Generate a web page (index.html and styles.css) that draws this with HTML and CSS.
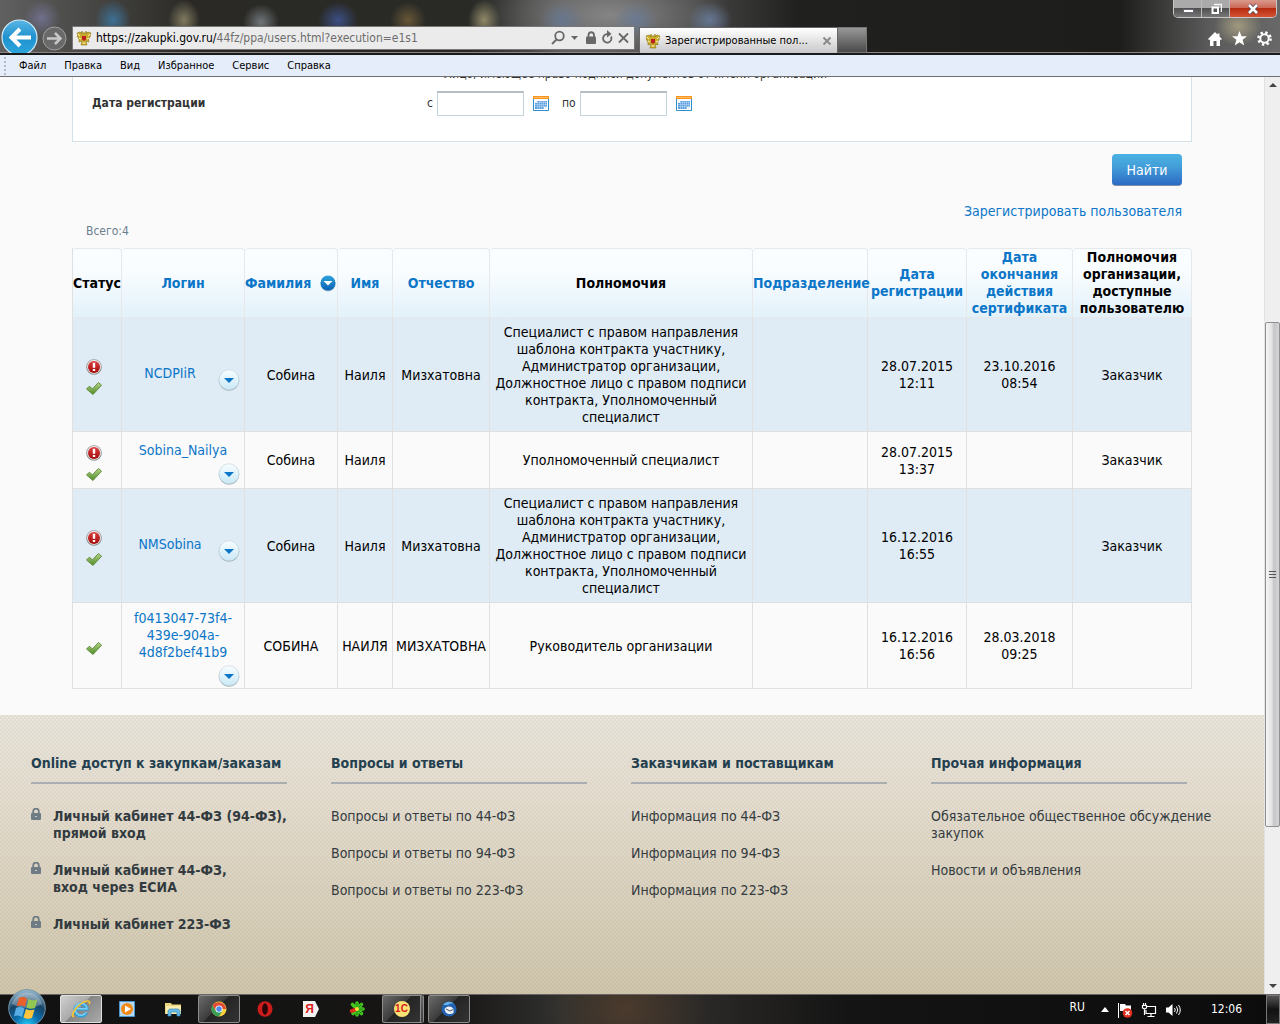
FILE: index.html
```html
<!DOCTYPE html>
<html lang="ru">
<head>
  <meta charset="UTF-8" />
  <meta name="viewport" content="width=device-width, initial-scale=1.0" />
  <title>Зарегистрированные пользователи</title>
  <link rel="stylesheet" href="styles.css">
</head>
<body>
  <!-- shared icons -->
  <svg class="sprite" width="0" height="0" aria-hidden="true">
    <defs>
      <linearGradient id="redGrad" x1="0" y1="0" x2="0" y2="1"><stop offset="0" stop-color="#dc4040"/><stop offset="1" stop-color="#a30808"/></linearGradient>
      <linearGradient id="greenGrad" x1="0" y1="0" x2="0" y2="1"><stop offset="0" stop-color="#b5d58a"/><stop offset="1" stop-color="#4f8a25"/></linearGradient>
      <linearGradient id="roundGrad" x1="0" y1="0" x2="0" y2="1"><stop offset="0" stop-color="#f8fdff"/><stop offset="1" stop-color="#c9e9f6"/></linearGradient>
      <linearGradient id="sortGrad" x1="0" y1="0" x2="0" y2="1"><stop offset="0" stop-color="#2fa4dc"/><stop offset="1" stop-color="#0b5fb4"/></linearGradient>
      <linearGradient id="backGrad" x1="0" y1="0" x2="0" y2="1"><stop offset="0" stop-color="#5ab6e4"/><stop offset=".5" stop-color="#1f92cf"/><stop offset="1" stop-color="#2ea6dd"/></linearGradient>
      <radialGradient id="orbGrad" cx=".5" cy="1" r="1"><stop offset="0" stop-color="#26d3ff"/><stop offset=".35" stop-color="#0c6fae"/><stop offset=".65" stop-color="#174467"/><stop offset="1" stop-color="#9fc0d4"/></radialGradient>
    </defs>
    <symbol id="alert" viewBox="0 0 16 16">
      <circle cx="8" cy="8" r="7.800" fill="#8e8e8e"/><circle cx="8" cy="7.700" r="7" fill="#e8e4e4"/>
      <circle cx="8" cy="8" r="6" fill="url(#redGrad)"/>
      <path d="M6.800 3.800h2.400v5H6.800zM6.800 10h2.400v2H6.800z" fill="#fff"/>
    </symbol>
    <symbol id="check" viewBox="0 0 16 16">
      <path d="M.5 8 3.300 5.200l3.200 2.600L12.400 1.500 15.600 4.200 7 13.500z" fill="url(#greenGrad)" stroke="#5d8a3a" stroke-width=".9" stroke-linejoin="round"/>
    </symbol>
    <symbol id="drop" viewBox="0 0 22 22">
      <circle cx="11" cy="11.500" r="10.300" fill="#9fb0b8"/><circle cx="11" cy="10.700" r="10" fill="url(#roundGrad)" stroke="#c5d5dc" stroke-width=".6"/>
      <path d="M6 9h10l-5 5z" fill="#0b76c8"/>
    </symbol>
    <symbol id="calendar" viewBox="0 0 16 16">
      <path d="M.5 1.500h15v13H.5z" fill="#fff" stroke="#2f8fce"/><path d="M0 0h16v3H0z" fill="#f7941d"/><path d="M1 1h14v1H1z" fill="#ffbb66"/>
      <path d="M4 5h10v6h-3v2H2V7h2z" fill="#5b9fdf"/>
      <path d="M2 6.500h12M2 8.500h12M2 10.500h12M4.500 5v8M6.500 5v8M8.500 5v8M10.500 5v8M12.500 5v8" stroke="#c4ddf4" stroke-width=".5"/>
    </symbol>
    <symbol id="lock" viewBox="0 0 10 12">
      <path d="M2.200 6V3.400a2.800 2.800 0 0 1 5.600 0V6" fill="none" stroke="currentColor" stroke-width="1.800"/><rect y="5" width="10" height="7" rx="1" fill="currentColor"/><path d="M4 8h2v1H4z" fill="#c9c8c2"/>
    </symbol>
    <symbol id="eagle" viewBox="0 0 16 16">
      <path d="M8 4 6.500 1.500 5 2l1 2-2-2-3 1 1 2-1 1 1 1.500 1 2L3 12l3-1-1 4h6l-1-4 3 1-.5-2.500 1-2L14.500 6 14 5l1-2-3-1-2 2 1-2-1.500-.5z" fill="#c9ab2b" stroke="#8a741b" stroke-width=".6"/>
      <path d="M2 4l2 2M3 8l2 1M14 4l-2 2M13 8l-2 1M6.500 13h3" stroke="#fbf5b8"/><path d="M6 6h4v3.500L8 11 6 9.500z" fill="#bc2020"/>
    </symbol>
  </svg>

  <header class="chrome">
    <button class="nav-back" aria-label="Назад">
      <svg width="37" height="37" viewBox="0 0 37 37"><circle cx="18.500" cy="18.500" r="17.500" fill="url(#backGrad)" stroke="#d5edf8" stroke-width="1.200"/><path d="M30 18.500H11M19 10l-8.500 8.500L19 27" fill="none" stroke="#fff" stroke-width="4"/></svg>
    </button>
    <button class="nav-forward" aria-label="Вперед">
      <svg width="25" height="25" viewBox="0 0 25 25"><circle cx="12.500" cy="12.500" r="11.500" fill="#696969" stroke="#a0a0a0"/><path d="M5 12.500h13M13 7l5.500 5.500L13 18" fill="none" stroke="#c8c8c8" stroke-width="2.500"/></svg>
    </button>
    <div class="address">
      <svg width="16" height="16"><use href="#eagle"/></svg>
      <span class="url">https://zakupki.gov.ru/<span>44fz/ppa/users.html?execution=e1s1</span></span>
      <svg width="80" height="16" viewBox="0 0 80 16" fill="none" stroke="#686868" stroke-width="1.800">
        <circle cx="8.500" cy="6" r="4.300"/><path d="M5.500 9.500 1 14"/><path d="M20 6h7l-3.500 4z" fill="#686868" stroke="none"/>
        <path d="M37.500 7V4.500a2.800 2.800 0 0 1 5.500 0V7"/><rect x="35" y="6.500" width="10" height="7.500" rx="1" fill="#686868" stroke="none"/>
        <path d="M60 6.500A4.200 4.200 0 1 1 56 4.200h1.500"/><path d="M56 0l4.500 4L56 7.500z" fill="#686868" stroke="none"/><path d="M68 3.500l9 9M77 3.500l-9 9"/>
      </svg>
    </div>
    <div class="tab">
      <svg width="16" height="16"><use href="#eagle"/></svg>
      <span>Зарегистрированные пол...</span>
      <button aria-label="Закрыть вкладку"><svg width="8" height="8" viewBox="0 0 8 8"><path d="M.5.5l7 7M7.500.5l-7 7" stroke="#8a8a8a" stroke-width="2"/></svg></button>
    </div>
    <button class="new-tab" aria-label="Новая вкладка"></button>
    <div class="chrome-right">
      <div class="window-buttons">
        <button aria-label="Свернуть"><svg width="12" height="12" viewBox="0 0 12 12"><path d="M1.500 6.500h10v3h-10z" fill="#fff" stroke="#555566" stroke-width=".8"/></svg></button>
        <button aria-label="Восстановить"><svg width="12" height="12" viewBox="0 0 12 12"><path d="M4 1.500h7.500V9" fill="none" stroke="#f4f4f4" stroke-width="1.500"/><path d="M2.500 4.500h5.500v5.500H2.500z" fill="#555" stroke="#fff" stroke-width="2"/></svg></button>
        <button class="close" aria-label="Закрыть"><svg width="12" height="12" viewBox="0 0 12 12"><path d="M2 2l8 8M10 2l-8 8" stroke="#504050" stroke-width="4"/><path d="M2 2l8 8M10 2l-8 8" stroke="#fff" stroke-width="2.600"/></svg></button>
      </div>
      <div class="tools">
        <svg width="14" height="14" viewBox="0 0 14 14"><path d="M7 0 0 7l1 1 1-.5V14h3.500V9h3v5H12V7.500l1 .5 1-1-2.500-2.500V1.500h-2v1z" fill="#fff"/></svg>
        <svg width="15" height="15" viewBox="0 0 15 15"><path d="M7.500 0 9.500 5.300H15L10.600 8.800 12.200 14.500 7.500 11.200 2.800 14.500 4.400 8.800 0 5.300h5.500z" fill="#fff"/></svg>
        <svg width="15" height="15" viewBox="0 0 15 15"><circle cx="7.500" cy="7.500" r="4.200" fill="none" stroke="#fff" stroke-width="2"/><circle cx="7.500" cy="7.500" r="6.100" fill="none" stroke="#fff" stroke-width="2.400" stroke-dasharray="2.400 2.390"/></svg>
      </div>
    </div>
  </header>

  <nav class="menu">
    <a href="#">Файл</a>
    <a href="#">Правка</a>
    <a href="#">Вид</a>
    <a href="#">Избранное</a>
    <a href="#">Сервис</a>
    <a href="#">Справка</a>
  </nav>

  <div class="viewport">
    <div class="page">
      <main class="content">
        <form class="search">
          <div class="filter">
            <p class="filter-hint">Лицо, имеющее право подписи документов от имени организации</p>
            <div class="filter-row">
              <span class="filter-name">Дата регистрации</span>
              <label for="dateFrom">с</label>
              <input type="text" id="dateFrom">
              <svg width="16" height="16"><use href="#calendar"/></svg>
              <label class="to" for="dateTo">по</label>
              <input type="text" id="dateTo">
              <svg width="16" height="16"><use href="#calendar"/></svg>
            </div>
          </div>
          <button type="button" class="find">Найти</button>
        </form>
        <a class="register" href="#">Зарегистрировать пользователя</a>
        <div class="total">Всего:4</div>

        <table class="users">
          <colgroup>
            <col class="c-status"><col class="c-login"><col class="c-surname"><col class="c-name"><col class="c-patronymic"><col><col class="c-unit"><col class="c-date"><col class="c-expiry"><col class="c-org">
          </colgroup>
          <thead>
            <tr>
              <th>Статус</th>
              <th><a href="#">Логин</a></th>
              <th><div class="sorted"><a href="#">Фамилия</a><svg width="16" height="17" viewBox="0 0 16 17"><circle cx="8" cy="9" r="7.500" fill="#9dbbd0"/><circle cx="8" cy="8" r="7.500" fill="url(#sortGrad)"/><path d="M3.500 6h9L8 10.500z" fill="#fff"/></svg></div></th>
              <th><a href="#">Имя</a></th>
              <th><a href="#">Отчество</a></th>
              <th>Полномочия</th>
              <th><a href="#">Подразделение</a></th>
              <th><a href="#">Дата<br>регистрации</a></th>
              <th><a href="#">Дата<br>окончания<br>действия<br>сертификата</a></th>
              <th>Полномочия<br>организации,<br>доступные<br>пользователю</th>
            </tr>
          </thead>
          <tbody>
            <tr>
              <td><div class="status"><svg width="16" height="16"><use href="#alert"/></svg><svg width="16" height="16"><use href="#check"/></svg></div></td>
              <td><div class="login"><a href="#">NCDPIiR</a><button aria-label="Меню"><svg width="22" height="22"><use href="#drop"/></svg></button></div></td>
              <td>Собина</td>
              <td>Наиля</td>
              <td>Мизхатовна</td>
              <td>Специалист с правом направления<br>шаблона контракта участнику,<br>Администратор организации,<br>Должностное лицо с правом подписи<br>контракта, Уполномоченный<br>специалист</td>
              <td></td>
              <td>28.07.2015<br>12:11</td>
              <td>23.10.2016<br>08:54</td>
              <td>Заказчик</td>
            </tr>
            <tr>
              <td><div class="status"><svg width="16" height="16"><use href="#alert"/></svg><svg width="16" height="16"><use href="#check"/></svg></div></td>
              <td><div class="login stacked"><a href="#">Sobina_Nailya</a><button aria-label="Меню"><svg width="22" height="22"><use href="#drop"/></svg></button></div></td>
              <td>Собина</td>
              <td>Наиля</td>
              <td></td>
              <td>Уполномоченный специалист</td>
              <td></td>
              <td>28.07.2015<br>13:37</td>
              <td></td>
              <td>Заказчик</td>
            </tr>
            <tr>
              <td><div class="status"><svg width="16" height="16"><use href="#alert"/></svg><svg width="16" height="16"><use href="#check"/></svg></div></td>
              <td><div class="login"><a href="#">NMSobina</a><button aria-label="Меню"><svg width="22" height="22"><use href="#drop"/></svg></button></div></td>
              <td>Собина</td>
              <td>Наиля</td>
              <td>Мизхатовна</td>
              <td>Специалист с правом направления<br>шаблона контракта участнику,<br>Администратор организации,<br>Должностное лицо с правом подписи<br>контракта, Уполномоченный<br>специалист</td>
              <td></td>
              <td>16.12.2016<br>16:55</td>
              <td></td>
              <td>Заказчик</td>
            </tr>
            <tr>
              <td><div class="status"><svg width="16" height="16"><use href="#check"/></svg></div></td>
              <td><div class="login stacked"><a href="#">f0413047-73f4-<br>439e-904a-<br>4d8f2bef41b9</a><button aria-label="Меню"><svg width="22" height="22"><use href="#drop"/></svg></button></div></td>
              <td>СОБИНА</td>
              <td>НАИЛЯ</td>
              <td>МИЗХАТОВНА</td>
              <td>Руководитель организации</td>
              <td></td>
              <td>16.12.2016<br>16:56</td>
              <td>28.03.2018<br>09:25</td>
              <td></td>
            </tr>
          </tbody>
        </table>
      </main>

      <footer class="footer">
        <section>
          <h3>Online доступ к закупкам/заказам</h3>
          <ul class="cabinets">
            <li><svg width="10" height="12"><use href="#lock"/></svg><a href="#">Личный кабинет 44-ФЗ (94-ФЗ),<br>прямой вход</a></li>
            <li><svg width="10" height="12"><use href="#lock"/></svg><a href="#">Личный кабинет 44-ФЗ,<br>вход через ЕСИА</a></li>
            <li><svg width="10" height="12"><use href="#lock"/></svg><a href="#">Личный кабинет 223-ФЗ</a></li>
          </ul>
        </section>
        <section>
          <h3>Вопросы и ответы</h3>
          <ul>
            <li><a href="#">Вопросы и ответы по 44-ФЗ</a></li>
            <li><a href="#">Вопросы и ответы по 94-ФЗ</a></li>
            <li><a href="#">Вопросы и ответы по 223-ФЗ</a></li>
          </ul>
        </section>
        <section>
          <h3>Заказчикам и поставщикам</h3>
          <ul>
            <li><a href="#">Информация по 44-ФЗ</a></li>
            <li><a href="#">Информация по 94-ФЗ</a></li>
            <li><a href="#">Информация по 223-ФЗ</a></li>
          </ul>
        </section>
        <section>
          <h3>Прочая информация</h3>
          <ul>
            <li><a href="#">Обязательное общественное обсуждение<br>закупок</a></li>
            <li><a href="#">Новости и объявления</a></li>
          </ul>
        </section>
      </footer>
    </div>

    <div class="scrollbar">
      <svg width="8" height="16" viewBox="0 0 8 16"><path d="M0 10h8L4 6z" fill="#444"/></svg>
      <div class="track">
        <div class="before"></div>
        <div class="thumb"><i></i><i></i><i></i></div>
        <div class="after"></div>
      </div>
      <svg width="8" height="16" viewBox="0 0 8 16"><path d="M0 6h8l-4 4z" fill="#444"/></svg>
    </div>
  </div>

  <div class="taskbar">
    <button class="start" aria-label="Пуск">
      <svg width="38" height="38" viewBox="0 0 38 38">
        <circle cx="19" cy="19" r="18.300" fill="url(#orbGrad)" stroke="#6f93a8"/>
        <path d="M4 15a15.500 15.500 0 0 1 30 0c-9 5-21 5-30 0z" fill="#fff" opacity=".28"/>
        <path d="M11 9c3-1.500 6-1 8 .5L17 18c-2-1.500-5-2-8.500-.5z" fill="#e8602c"/><path d="M20.500 10c3 1.500 6 1.500 9 .5L27 19c-3 1-6 1-8.500-.5z" fill="#93c653"/>
        <path d="M8 19c3-1.500 6-1 8.500.5L14 28c-2.500-1.500-5-2-8-.5z" fill="#58aee4"/><path d="M18 20c3 1.500 5.500 1.500 8.500.5L24 29c-3 1-6 1-8.500-.5z" fill="#fcc63c"/>
      </svg>
    </button>
    <div class="apps">
      <button class="active" aria-label="Internet Explorer"><svg width="20" height="20" viewBox="0 0 20 20"><path d="M15.500 13.500A6 6 0 1 1 16 10H5" fill="none" stroke="#2b9fdc" stroke-width="3.200"/><path d="M15.200 13.300A6 6 0 1 1 16 9.700H5" fill="none" stroke="#7dd0f6" stroke-width="1.400"/><path d="M3 18c-5-2 6-16 14-16 2 0 2 2 1 3" fill="none" stroke="#f4c430" stroke-width="1.700"/></svg></button>
      <button aria-label="Проигрыватель"><svg width="16" height="16" viewBox="0 0 16 16"><path d="M.5.5h15v15H.5z" fill="#b6daf3" stroke="#4a95cb"/><circle cx="8" cy="8" r="6" fill="#f28a16"/><path d="M6 4.500v7l6-3.500z" fill="#fff"/></svg></button>
      <button aria-label="Проводник"><svg width="17" height="16" viewBox="0 0 17 16"><path d="M0 2h6l1 1.500h9V13H0z" fill="#ecd57c"/><path d="M1 5h15v8H1z" fill="#faedaf"/><path d="M3 15v-5l1.500-2h9l1.500 2v5h-3v-4H6v4z" fill="#6bbbe6" stroke="#358ebf" stroke-width=".7"/></svg></button>
      <button class="open" aria-label="Chrome"><svg width="16" height="16" viewBox="0 0 16 16"><circle cx="8" cy="8" r="7.500" fill="#f9cf3c"/><path d="M8 8H15A7.500 7.500 0 0 0 1.500 4.300L4.700 10z" fill="#df4936"/><path d="M1.500 4.300A7.500 7.500 0 0 0 8 15.500L11.300 10 8 8 4.700 10z" fill="#38a156"/><circle cx="8" cy="8" r="3.600" fill="#fff"/><circle cx="8" cy="8" r="2.700" fill="#4b8bf0"/></svg></button>
      <button aria-label="Opera"><svg width="16" height="16" viewBox="0 0 16 16"><ellipse cx="8" cy="8" rx="7.500" ry="7.800" fill="#cc1c1c"/><ellipse cx="8" cy="8" rx="2.800" ry="5.800" fill="#260606"/></svg></button>
      <button class="yandex" aria-label="Яндекс"><span>Я</span></button>
      <button aria-label="ICQ"><svg width="16" height="16" viewBox="0 0 16 16"><g stroke="#43c51f" stroke-width="3.600" stroke-linecap="round"><path d="M8 8V2M8 8l4.500-4.500M8 8h6M8 8l4.500 4.500M8 8v6M8 8l-4 4.500M8 8 3.500 3.500"/><path d="M7 8.500 2.500 10" stroke="#e22c1e"/></g><path d="M8 8V2M8 8l4.500-4.500M8 8h6M8 8l4.500 4.500M8 8v6" stroke="#238c12"/><circle cx="8" cy="8" r="2" fill="#f8e23b"/></svg></button>
      <button class="open group one-c" aria-label="1С"><span>1С</span></button>
      <button class="open" aria-label="Thunderbird"><svg width="16" height="16" viewBox="0 0 16 16"><circle cx="8" cy="8" r="7.500" fill="#2262b0"/><path d="M2 4c3-4 8-4 11-1-3-1-5 0-6 1z" fill="#65b2ee"/><path d="M3.500 8c2-3 5-3 7-2l2 2v4c-3 2-7 1-8-1z" fill="#eef1f5"/><path d="M5 8l4 2 3-1.500" fill="none" stroke="#345" stroke-width=".9"/></svg></button>
    </div>
    <div class="tray">
      <span class="lang">RU</span>
      <svg width="8" height="5" viewBox="0 0 8 5"><path d="M0 5h8L4 0z" fill="#fff"/></svg>
      <svg width="16" height="16" viewBox="0 0 16 16"><path d="M1.500 1v15" stroke="#fff"/><path d="M3 2h5l1 1.500h5V9H3z" fill="#fff"/><circle cx="10.500" cy="11" r="4.800" fill="#df3020"/><path d="M8.500 9l4 4M12.500 9l-4 4" stroke="#fff" stroke-width="1.500"/></svg>
      <svg width="16" height="16" viewBox="0 0 16 16" fill="none" stroke="#fff" stroke-width="1.200"><path d="M6 4.500h8.500v7H5V8M10 11.500V14M6.500 14.500h7"/><path d="M1.500 3.500h4V6L3.500 7 1.500 6zM2.500 1v2M4.500 1v2M3.500 7v6"/></svg>
      <svg width="16" height="16" viewBox="0 0 16 16"><path d="M1 5.500h2.500L7.500 2v12l-4-3.500H1z" fill="#fff"/><path d="M9.500 6q1.500 2 0 4M11.500 4.500q2.500 3.500 0 7M13.500 3q3.500 5 0 10" fill="none" stroke="#fff"/></svg>
      <time class="clock">12:06</time>
      <button class="show-desktop" aria-label="Свернуть все окна"></button>
    </div>
  </div>
</body>
</html>
```
FILE: styles.css
```css
* {
  box-sizing: border-box;
}

body {
  margin: 0;
  height: 100vh;
  display: flex;
  flex-direction: column;
  overflow: hidden;
  font-family: "DejaVu Sans Condensed", "Noto Sans", sans-serif;
  font-size: 14px;
  line-height: 17px;
  color: #000;
  background: #fafafa;
}

button {
  margin: 0;
  padding: 0;
  border: none;
  background: none;
  font-family: inherit;
  cursor: pointer;
}

svg {
  display: block;
  flex: none;
}

a {
  color: #0b76c8;
  text-decoration: none;
}

.sprite {
  position: absolute;
}

/* browser window */
.chrome {
  flex: none;
  display: flex;
  align-items: flex-end;
  height: 55px;
  border-bottom: 2px solid #1a1a1a;
  box-shadow: inset 0 -1px #8d8585;
  background:
    radial-gradient(ellipse 18px 18px at 42px 18px, rgba(128, 128, 176, 0.6), transparent),
    radial-gradient(ellipse 18px 20px at 113px 20px, rgba(61, 124, 170, 0.8), transparent),
    radial-gradient(ellipse 16px 20px at 184px 20px, rgba(164, 156, 120, 0.7), transparent),
    radial-gradient(ellipse 18px 18px at 261px 22px, rgba(142, 150, 156, 0.7), transparent),
    radial-gradient(ellipse 20px 18px at 338px 20px, rgba(64, 88, 154, 0.8), transparent),
    radial-gradient(ellipse 18px 18px at 408px 20px, rgba(143, 116, 68, 0.6), transparent),
    radial-gradient(ellipse 16px 20px at 484px 20px, rgba(168, 159, 120, 0.8), transparent),
    radial-gradient(ellipse 22px 18px at 562px 20px, rgba(99, 121, 156, 0.7), transparent),
    radial-gradient(ellipse 22px 18px at 636px 20px, rgba(99, 121, 156, 0.7), transparent),
    radial-gradient(ellipse 22px 18px at 710px 20px, rgba(112, 136, 176, 0.7), transparent),
    radial-gradient(ellipse 120px 50px at 610px 15px, #858585, transparent),
    radial-gradient(ellipse 24px 20px at 1238px 26px, #a19a80, transparent),
    linear-gradient(90deg, #606060 0, #474745 90px, #2a2925 190px, #292a26 470px, #555 560px, #444 700px, #20201e 800px, #1d1d1b 1120px, #5b5b5b 1210px, #686868 100%);
}

.nav-back {
  margin-left: 1px;
  height: 34px;
  overflow: hidden;
}

.nav-forward {
  margin: 0 5px 2px 4px;
}

.address {
  display: flex;
  align-items: center;
  flex: 1;
  max-width: 563px;
  height: 24px;
  margin-bottom: 3px;
  padding: 0 3px;
  border: 1px solid #777;
  background: #ebebeb;
}

.url {
  flex: 1;
  margin-left: 4px;
  font-size: 12px;
  white-space: nowrap;
}

.url span {
  color: #6d6d6d;
}

.tab {
  display: flex;
  align-items: center;
  width: 199px;
  height: 26px;
  margin-left: 4px;
  padding: 0 6px 0 5px;
  border: 1px solid #666;
  border-bottom: none;
  background: linear-gradient(#fff, #c9c9cb);
  font-size: 11px;
  white-space: nowrap;
}

.tab span {
  flex: 1;
  margin-left: 4px;
}

.new-tab {
  width: 29px;
  height: 26px;
  border: 1px solid #777;
  border-left: none;
  background: linear-gradient(#989898, #4a4a4a);
}

.chrome-right {
  display: flex;
  flex-direction: column;
  align-items: flex-end;
  justify-content: space-between;
  height: 53px;
  margin-left: auto;
}

.window-buttons {
  display: flex;
  margin-right: 3px;
  border: 1px solid #c7c7c7;
  border-top: none;
  border-radius: 0 0 5px 5px;
  overflow: hidden;
}

.window-buttons button {
  display: flex;
  justify-content: center;
  align-items: center;
  width: 28px;
  height: 17px;
  border-right: 1px solid #bbb;
  background: linear-gradient(#aaa 0 50%, #505050 50%, #777);
}

.window-buttons .close {
  width: 46px;
  border: none;
  background: linear-gradient(#d99a8d 0, #cb6451 50%, #b52c10 50%, #d65233);
}

.tools {
  display: flex;
  gap: 10px;
  align-items: center;
  padding: 0 8px 7px 0;
}

.menu {
  flex: none;
  display: flex;
  align-items: center;
  gap: 18px;
  height: 22px;
  padding-left: 4px;
  border-bottom: 1px solid #707070;
  background: #e6edfa;
  font-size: 11px;
}

.menu::before {
  content: "";
  height: 18px;
  margin-right: -5px;
  border-left: 2px dotted #b4bac6;
}

.menu a {
  color: #000;
}

.viewport {
  flex: 1;
  display: flex;
  min-height: 0;
  overflow: hidden;
}

.page {
  flex: 1;
  display: flex;
  flex-direction: column;
  min-width: 0;
  overflow: hidden;
}

/* page content */
.content {
  flex: none;
  display: flex;
  flex-direction: column;
  padding: 0 72px 26px;
}

.search {
  display: flex;
  flex-direction: column;
}

.filter {
  margin-top: -12px;
  padding: 0 19px 25px;
  border: 1px solid #d3e2e8;
  background: #fff;
  font-size: 12px;
  color: #333;
}

.filter-hint {
  margin: 0 0 8px 352px;
}

.filter-row {
  display: flex;
  align-items: center;
}

.filter-name {
  width: 335px;
  font-weight: bold;
}

.filter-row input {
  width: 87px;
  height: 25px;
  margin: 0 9px 0 4px;
  border: 1px solid #c3d3dc;
  border-top: 2px solid #b5bcc2;
  background: #fff;
}

.filter-row .to {
  margin-left: 13px;
}

.find {
  align-self: flex-end;
  width: 70px;
  height: 32px;
  margin: 12px 10px 0 0;
  border-bottom: 1px solid #7e8fa8;
  border-radius: 4px;
  background: linear-gradient(#4bb1e3, #439fd9 40%, #2b6bc4);
  color: #fff;
  font-size: 14px;
}

.register {
  align-self: flex-end;
  margin: 17px 10px 0 0;
}

.total {
  margin: 3px 14px 8px;
  font-size: 12px;
  color: #6c7f8e;
}

.users {
  width: 100%;
  table-layout: fixed;
  border-collapse: separate;
  border-spacing: 0;
  border-left: 1px solid #e0e0e0;
  text-align: center;
}

.c-status {
  width: 49px;
}

.c-login {
  width: 123px;
}

.c-surname {
  width: 93px;
}

.c-name {
  width: 55px;
}

.c-patronymic {
  width: 97px;
}

.c-unit {
  width: 115px;
}

.c-date {
  width: 99px;
}

.c-expiry {
  width: 106px;
}

.c-org {
  width: 119px;
}

.users th {
  height: 70px;
  padding: 0;
  border: 1px solid #e6e8ea;
  border-left: none;
  border-radius: 4px 4px 0 0;
  background: linear-gradient(#fafdff 30%, #e2f1fa);
  white-space: nowrap;
}

.users td {
  height: 57px;
  padding: 6px 0 5px;
  border-right: 1px solid #e0e0e0;
  border-bottom: 1px solid #e0e0e0;
  white-space: nowrap;
}

.users tbody tr:nth-child(odd) {
  background: #dfebf5;
}

.sorted {
  display: flex;
  justify-content: space-between;
  align-items: center;
  padding-right: 1px;
}

.status {
  display: flex;
  flex-direction: column;
  gap: 6px;
  padding: 6px 0 0 13px;
}

.login {
  display: flex;
  align-items: center;
  padding-right: 4px;
}

.login a {
  flex: 1;
  padding-bottom: 4px;
}

.login button {
  margin-top: 10px;
}

.login.stacked {
  display: block;
  padding: 1px 0 0;
}

.login.stacked a {
  display: block;
}

.login.stacked button {
  display: block;
  margin: 0 4px -4px auto;
}

/* footer */
.footer {
  flex: 1;
  display: grid;
  grid-template-columns: repeat(4, 300px);
  align-content: start;
  padding: 40px 0 0 31px;
  background:
    conic-gradient(rgba(120, 100, 60, 0.08) 25%, transparent 0 50%, rgba(120, 100, 60, 0.08) 0 75%, transparent 0) 0 0 / 4px 4px,
    linear-gradient(#e9e6dd, #e5ded1 30%, #cfc6ad);
}

.footer h3 {
  width: 256px;
  margin: 0 0 24px;
  padding-bottom: 10px;
  border-bottom: 2px solid #a9afb1;
  font-size: 14px;
  color: #24404f;
  white-space: nowrap;
}

.footer ul {
  display: grid;
  gap: 20px;
  margin: 0;
  padding: 0;
  list-style: none;
}

.footer a {
  color: #333b40;
  white-space: nowrap;
}

.cabinets li {
  display: flex;
  gap: 12px;
  font-weight: bold;
  color: #6f7c85;
}

/* scrollbar */
.scrollbar {
  display: flex;
  flex-direction: column;
  align-items: center;
  width: 16px;
  border-left: 1px solid #e2e2e2;
  background: #efefef;
}

.track {
  flex: 1;
  align-self: stretch;
  display: flex;
  flex-direction: column;
}

.before {
  flex: 230;
}

.thumb {
  flex: 504;
  display: flex;
  flex-direction: column;
  justify-content: center;
  align-items: center;
  gap: 2px;
  border: 1px solid #8e8f92;
  border-radius: 2px;
  background: linear-gradient(90deg, #f5f5f5, #e2e2e3 45%, #c6c6c9 60%, #d4d4d6);
}

.thumb i {
  width: 7px;
  height: 1px;
  background: #555;
}

.after {
  flex: 151;
}

/* taskbar */
.taskbar {
  flex: none;
  display: flex;
  height: 30px;
  border-top: 1px solid #6c6464;
  background:
    radial-gradient(ellipse 80px 60px at 625px 15px, #4b3a2c, transparent),
    linear-gradient(90deg, #111, #171615 450px, #30302e 560px, #2b2927 700px, #141414 850px, #0c0c0c);
}

.start {
  align-self: flex-end;
  height: 35px;
  margin: 0 14px 0 8px;
  position: relative;
}

.apps {
  display: flex;
  gap: 4px;
}

.apps button {
  display: flex;
  justify-content: center;
  align-items: center;
  width: 42px;
  height: 28px;
  border-radius: 2px;
}

.apps .open {
  border: 1px solid #8c8c8c;
  background: linear-gradient(135deg, #6a6a6a, #3c3c3c 45%, #242424 46%, #343434);
}

.apps .active {
  border: 1px solid #e0e0e0;
  background: linear-gradient(135deg, #d0d0d0, #a9a9a9 45%, #858585 46%, #aaa);
}

.apps .group {
  border-right: 4px double #8c8c8c;
}

.yandex span {
  width: 16px;
  padding-right: 3px;
  background: #f2f2f2;
  clip-path: polygon(0 0, 75% 0, 100% 50%, 75% 100%, 0 100%);
  color: #dd1d1d;
  font: bold 12px/16px "Liberation Sans", sans-serif;
}

.one-c span {
  width: 16px;
  height: 16px;
  border-radius: 50%;
  background: #fbe275;
  color: #d21b1b;
  font: bold 10px/16px "Liberation Sans", sans-serif;
}

.tray {
  display: flex;
  align-items: center;
  gap: 8px;
  margin-left: auto;
  color: #fff;
}

.lang {
  margin: 0 8px 4px 0;
  font-size: 12px;
}

.clock {
  margin: 0 16px 0 22px;
  font-size: 12px;
}

.show-desktop {
  align-self: stretch;
  width: 14px;
  border: 1px solid #777;
  background: linear-gradient(#555, #111 50%, #222);
}
```
